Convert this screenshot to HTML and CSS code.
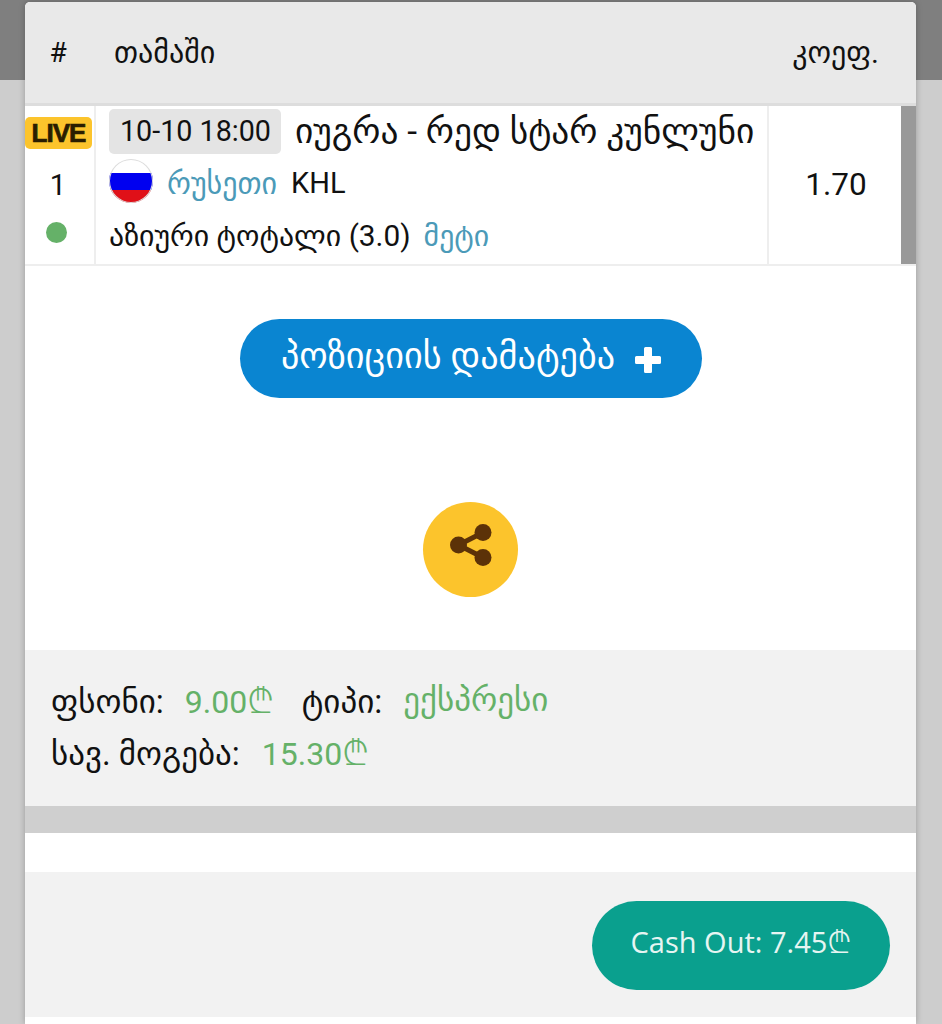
FILE: index.html
```html
<!DOCTYPE html>
<html lang="en">
<head>
  <meta charset="UTF-8" />
  <meta name="viewport" content="width=device-width, initial-scale=1.0"/>
  <title>Bet details</title>
  <link rel="stylesheet" href="styles.css">
</head>
<body>
  <div class="modal">
    <div class="table-head">
      <div class="col-num">#</div>
      <div class="col-game">თამაში</div>
      <div class="col-odds">კოეფ.</div>
    </div>

    <div class="table-row">
      <div class="cell-num">
        <span class="live">LIVE</span>
        <span class="num">1</span>
        <span class="status"></span>
      </div>
      <div class="cell-game">
        <div class="game-line">
          <span class="date">10-10 18:00</span>
          <span class="teams">იუგრა - რედ სტარ კუნლუნი</span>
        </div>
        <div class="league-line">
          <span class="flag"></span>
          <span class="country">რუსეთი</span>
          <span class="league">KHL</span>
        </div>
        <div class="market-line">
          <span>აზიური ტოტალი (3.0)</span>
          <span class="pick">მეტი</span>
        </div>
      </div>
      <div class="cell-odds">1.70</div>
      <div class="scrollbar"></div>
    </div>

    <div class="actions">
      <button class="add-btn" type="button">
        <span>პოზიციის დამატება</span>
        <svg width="28" height="28" viewBox="0 0 28 28"><path d="M11.5 1h5a1.500 1.500 0 0 1 1.500 1.500V10h7.500a1.500 1.500 0 0 1 1.500 1.500v5a1.500 1.500 0 0 1-1.500 1.500H18v7.500a1.500 1.500 0 0 1-1.500 1.500h-5a1.500 1.500 0 0 1-1.500-1.500V18H2.500A1.500 1.500 0 0 1 1 16.500v-5A1.500 1.500 0 0 1 2.500 10H10V2.500A1.500 1.500 0 0 1 11.500 1z" fill="#fff"/></svg>
      </button>
      <button class="share-btn" type="button">
        <svg width="44" height="44" viewBox="0 0 44 44">
          <path d="M34 9.500 9.500 22 34 34.500" fill="none" stroke="#5c3208" stroke-width="5"/>
          <circle cx="34" cy="9.500" r="8.500" fill="#5c3208"/>
          <circle cx="9.500" cy="22" r="8.500" fill="#5c3208"/>
          <circle cx="34" cy="34.500" r="8.500" fill="#5c3208"/>
        </svg>
      </button>
    </div>

    <div class="summary">
      <div class="summary-line">
        <span class="label">ფსონი:</span>
        <span class="value">9.00<span class="lari">₾</span></span>
        <span class="label type-label">ტიპი:</span>
        <span class="value type-value">ექსპრესი</span>
      </div>
      <div class="summary-line">
        <span class="label">სავ. მოგება:</span>
        <span class="value">15.30<span class="lari">₾</span></span>
      </div>
    </div>
    <div class="divider"></div>
    <div class="spacer"></div>
    <div class="cashout">
      <button class="cashout-btn" type="button">Cash Out: 7.45<span class="lari">₾</span></button>
    </div>
  </div>
</body>
</html>
```

FILE: styles.css
```css
html, body {
  height: 1024px;
  overflow: hidden;
}
body {
  margin: 0;
  font-family: Roboto, "DejaVu Sans", sans-serif;
  font-size: 29px;
  color: #111;
  background: linear-gradient(#7f7f7f 80px, #cdcdcd 80px);
}
.modal {
  margin: 2px 26px 0 25px;
  height: 1022px;
  background: white;
  border-radius: 5px 5px 0 0;
  box-shadow: 0 0 6px rgba(0,0,0,0.25);
}
.table-head {
  display: flex;
  align-items: center;
  height: 101px;
  font-size: 30px;
  background-color: #e9e9e9;
  border-bottom: 3px solid #ddd;
  border-radius: 5px 5px 0 0;
}
.col-num {
  width: 66px;
  text-align: center;
  font-size: 28px;
}
.col-game {
  margin-left: 23px;
}
.col-odds {
  margin-left: auto;
  margin-right: 37px;
}
.table-row {
  display: flex;
  height: 158px;
  border-bottom: 2px solid #eee;
}
.cell-num {
  width: 69px;
  flex-shrink: 0;
  display: flex;
  flex-direction: column;
  align-items: center;
  border-right: 2px solid #eee;
}
.live {
  margin-top: 11px;
  align-self: flex-start;
  width: 67px;
  height: 32px;
  line-height: 32px;
  text-align: center;
  font-family: "Liberation Sans", sans-serif;
  font-size: 26px;
  font-weight: bold;
  letter-spacing: -1px;
  -webkit-text-stroke: 0.7px #2a1d00;
  color: #2a1d00;
  background-color: #fcc42c;
  border-radius: 5px;
}
.num {
  margin: 19px 3px 0 0;
  line-height: 34px;
}
.status {
  margin: 20px 6px 0 0;
  width: 21px;
  height: 21px;
  border-radius: 50%;
  background-color: #65b168;
}
.cell-game {
  flex: 1;
  padding-left: 13px;
  border-right: 2px solid #eee;
  white-space: nowrap;
}
.game-line {
  display: flex;
  align-items: center;
  margin-top: 3px;
  height: 45px;
}
.date {
  padding: 0 10px 0 11px;
  line-height: 45px;
  font-size: 28.7px;
  background-color: #e4e4e4;
  border-radius: 5px;
}
.teams {
  margin-left: 14px;
  padding-bottom: 2px;
  font-size: 35.4px;
}
.league-line {
  display: flex;
  align-items: center;
  height: 44px;
  margin-top: 5px;
}
.flag {
  width: 44px;
  height: 44px;
  border-radius: 50%;
  background: linear-gradient(#fff 31%, #0000f0 31%, #0000f0 70%, #e01018 70%);
  box-shadow: inset 0 0 0 1px #ddd;
}
.country {
  margin-left: 14px;
  padding-top: 4px;
  font-size: 30px;
  color: #4b9ab8;
}
.league {
  margin-left: 14px;
  padding-top: 4px;
}
.market-line {
  display: flex;
  align-items: center;
  height: 40px;
  margin-top: 12px;
  font-size: 29.8px;
}
.pick {
  margin-left: 13px;
  color: #4b9ab8;
}
.cell-odds {
  width: 130px;
  padding-left: 2px;
  flex-shrink: 0;
  text-align: center;
  font-size: 31.500px;
  line-height: 158px;
}
.scrollbar {
  width: 15px;
  flex-shrink: 0;
  background-color: #999;
}
.actions {
  height: 384px;
  display: flex;
  flex-direction: column;
  align-items: center;
}
button {
  border: none;
  cursor: pointer;
  font: inherit;
  color: white;
}
.add-btn {
  margin-top: 53px;
  width: 462px;
  height: 79px;
  padding: 0 0 0 2px;
  display: flex;
  align-items: center;
  justify-content: center;
  gap: 19px;
  font-size: 36.2px;
  background-color: #0a85d1;
  border-radius: 40px;
}
.add-btn span {
  padding-bottom: 6px;
}
.add-btn svg {
  margin-top: 2px;
}
.share-btn {
  margin-top: 104px;
  width: 95px;
  height: 95px;
  padding: 0 0 9px 0;
  display: flex;
  align-items: center;
  justify-content: center;
  background-color: #fcc42c;
  border-radius: 50%;
}
.summary {
  height: 156px;
  box-sizing: border-box;
  padding: 26px 0 0 26px;
  font-size: 33px;
  background-color: #f2f2f2;
}
.summary-line {
  display: flex;
  height: 50px;
  margin-bottom: 2px;
  align-items: center;
  white-space: nowrap;
}
.value {
  margin-left: 22px;
  padding-bottom: 4px;
  font-size: 32px;
  color: #65b168;
}
.summary-line:first-child .value {
  margin-left: 21px;
}
.type-value {
  font-size: 33px;
}
.type-label {
  margin-left: 28px;
}
.lari {
  font-family: "Noto Sans", "DejaVu Sans", sans-serif;
  font-size: 1.1em;
  font-weight: 300;
}
.divider {
  height: 27px;
  background-color: #cfcfcf;
}
.spacer {
  height: 39px;
}
.cashout {
  height: 145px;
  box-sizing: border-box;
  padding: 29px 26px 0 0;
  display: flex;
  justify-content: flex-end;
  background-color: #f2f2f2;
}
.cashout-btn {
  width: 298px;
  height: 89px;
  padding: 0 0 10px;
  font-family: "Open Sans", sans-serif;
  font-size: 29px;
  background-color: #0aa08e;
  border-radius: 45px;
  color: #e6f5f2;
}
```
